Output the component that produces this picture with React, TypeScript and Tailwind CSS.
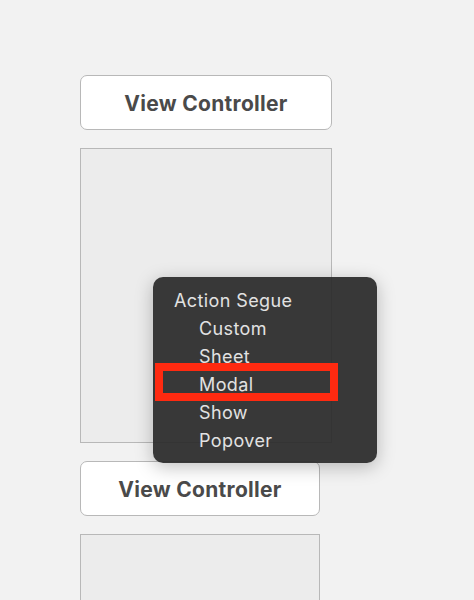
export default function App() {
  const items = ['Custom', 'Sheet', 'Modal', 'Show', 'Popover']

  return (
    <div className="relative h-[600px] w-[474px] overflow-hidden bg-[#f2f2f2] font-['Inter',sans-serif]">
      <div className="flex flex-col pl-[80px] pt-[75px]">
        <div className="flex h-[55px] w-[252px] items-center justify-center rounded-[7px] border-[1.5px] border-[#b8b8b8] bg-white pt-[2px] text-[21px] font-bold tracking-[0.3px] text-[#4a4a4a]">
          View Controller
        </div>
        <div className="mt-[18px] h-[295px] w-[252px] border-[1.5px] border-[#b8b8b8] bg-[#ececec]" />
        <div className="mt-[18px] flex h-[55px] w-[240px] items-center justify-center rounded-[7px] border-[1.5px] border-[#b8b8b8] bg-white pt-[2px] text-[21px] font-bold tracking-[0.3px] text-[#4a4a4a]">
          View Controller
        </div>
        <div className="mt-[18px] h-[100px] w-[240px] border-[1.5px] border-[#b8b8b8] bg-[#ececec]" />
      </div>

      {/* context menu */}
      <div className="absolute left-[153px] top-[277px] w-[224px] rounded-[10px] bg-[#282828]/92 pb-[9px] pt-[9px] text-[18px] tracking-[0.4px] text-[#e2e2e2] shadow-[0_4px_18px_rgba(0,0,0,0.25)]">
        <div className="flex h-[28px] items-center pl-[21px]">Action Segue</div>
        {items.map((it) => (
          <div key={it} className="flex h-[28px] items-center pl-[46px]">
            {it}
          </div>
        ))}
      </div>

      {/* highlight */}
      <div className="absolute left-[155px] top-[363px] h-[38px] w-[183px] border-[8px] border-[#ff2a10]" />
    </div>
  )
}
